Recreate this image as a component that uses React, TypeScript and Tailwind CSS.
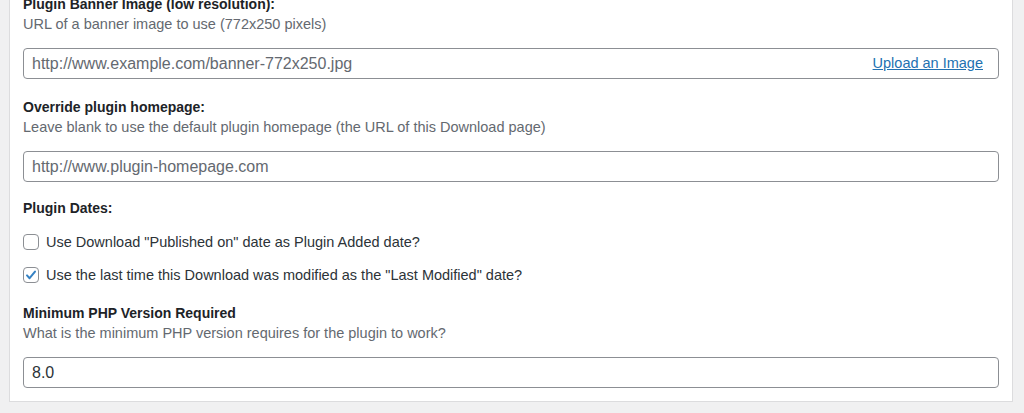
import React from "react";

const FONT = { fontFamily: '"Liberation Sans", Arial, sans-serif' };

function Field({
  label,
  desc,
  placeholder,
  value,
  link,
  className = "",
}: {
  label: string;
  desc?: string;
  placeholder?: string;
  value?: string;
  link?: string;
  className?: string;
}) {
  return (
    <div className={className}>
      <p className="text-[14px] font-semibold leading-5 text-[#1d2327]">{label}</p>
      {desc && <p className="text-[14.5px] leading-5 text-[#646970]">{desc}</p>}
      <div className="mt-[14px] flex h-[31px] items-center justify-between rounded-[4px] border border-[#8c8f94] bg-white pl-[8px] pr-[15px]">
        {value ? (
          <span className="text-[16px] text-[#2c3338]">{value}</span>
        ) : (
          <span className="text-[16px] text-[#646970]">{placeholder}</span>
        )}
        {link && (
          <a href="#" className="text-[14.5px] text-[#2271b1] underline">
            {link}
          </a>
        )}
      </div>
    </div>
  );
}

function Check({ checked, label, className = "" }: { checked?: boolean; label: string; className?: string }) {
  return (
    <label className={`flex items-center gap-[7px] ${className}`}>
      <span className="flex h-[16px] w-[16px] flex-none items-center justify-center rounded-[4px] border border-[#8c8f94] bg-white">
        {checked && (
          <svg width="14" height="14" viewBox="0 0 14 14" fill="none" aria-hidden>
            <path d="M3 7.4l2.6 2.8L11 3.6" stroke="#3582c4" strokeWidth="2" strokeLinecap="round" strokeLinejoin="round" />
          </svg>
        )}
      </span>
      <span className="text-[14.5px] leading-5 text-[#2c3338]">{label}</span>
    </label>
  );
}

export default function App() {
  return (
    <div className="h-[413px] overflow-hidden bg-[#f0f0f1]" style={FONT}>
      <div className="mt-[-8px] ml-[9px] w-[1004px] border border-[#dcdcde] bg-white pl-[13px] pr-[13px] pb-[13px] pt-[1px]">
        <Field
          label="Plugin Banner Image (low resolution):"
          desc="URL of a banner image to use (772x250 pixels)"
          placeholder="http://www.example.com/banner-772x250.jpg"
          link="Upload an Image"
        />
        <Field
          className="mt-[18px]"
          label="Override plugin homepage:"
          desc="Leave blank to use the default plugin homepage (the URL of this Download page)"
          placeholder="http://www.plugin-homepage.com"
        />
        <p className="mt-[16px] text-[14px] font-semibold leading-5 text-[#1d2327]">Plugin Dates:</p>
        <Check className="mt-[14px]" label={'Use Download "Published on" date as Plugin Added date?'} />
        <Check className="mt-[13px]" checked label={'Use the last time this Download was modified as the "Last Modified" date?'} />
        <Field
          className="mt-[18px]"
          label="Minimum PHP Version Required"
          desc="What is the minimum PHP version requires for the plugin to work?"
          value="8.0"
        />
      </div>
    </div>
  );
}
